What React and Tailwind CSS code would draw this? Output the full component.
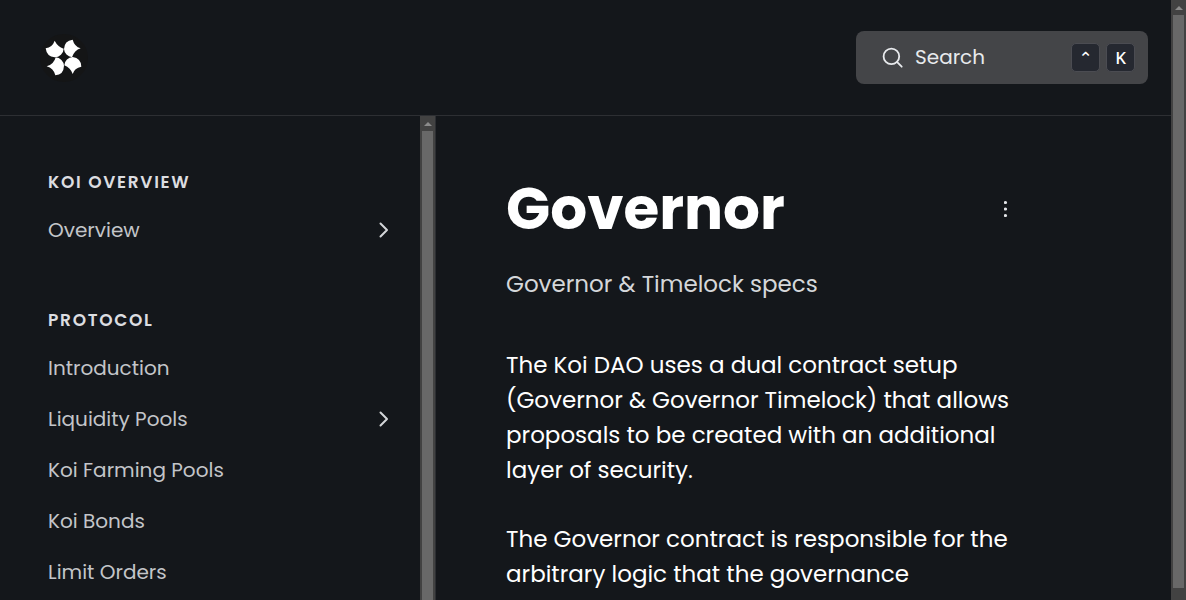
import React from "react";

const groups = [
  { title: "KOI OVERVIEW", items: [{ label: "Overview", nested: true }] },
  {
    title: "PROTOCOL",
    items: [
      { label: "Introduction" },
      { label: "Liquidity Pools", nested: true },
      { label: "Koi Farming Pools" },
      { label: "Koi Bonds" },
      { label: "Limit Orders" },
    ],
  },
];

function Logo() {
  return (
    <svg viewBox="0 0 162 162" className="size-[54px]" aria-hidden="true">
      <circle cx="81" cy="81" r="72" fill="#141516" />
      <g fill="#fff">
        <path d="M53 29Q62 47 80 53A27 27 0 0 1 53 79Q29 77 26 52Q46 49 53 29Z" />
        <path d="M107 26Q112 46 131 52Q112 58 105 79A27 27 0 0 1 81 54Q82 29 107 26Z" />
        <path d="M133 107Q112 111 107 129Q101 111 82 103A27 27 0 0 1 107 78Q132 81 133 107Z" />
        <path d="M55 133Q50 112 29 106Q51 100 56 79A27 27 0 0 1 81 104Q80 131 55 133Z" />
      </g>
    </svg>
  );
}

function Chevron() {
  return (
    <svg viewBox="0 0 10 16" className="h-4 w-[10px]" fill="none" stroke="#d4d6d9" strokeWidth="2" strokeLinecap="round" strokeLinejoin="round" aria-hidden="true">
      <path d="M1.5 1.5L8 8L1.5 14.5" />
    </svg>
  );
}

function Scrollbar({ end }) {
  return (
    <div className="flex w-[15px] shrink-0 flex-col items-center bg-[#424242]" aria-hidden="true">
      <div className="flex h-[15px] shrink-0 items-center">
        <svg viewBox="0 0 8 4" className="h-1 w-2" fill="#8b8b8b">
          <path d="M4 0L8 4H0Z" />
        </svg>
      </div>
      <div className="w-[11px] grow bg-[#686868]" />
      {end && <div className="h-3 shrink-0" />}
    </div>
  );
}

function Key({ children }) {
  return (
    <kbd className="flex size-[29px] items-center justify-center rounded-[5px] border border-[#4b4c52] bg-[#252830] font-['Noto_Sans','DejaVu_Sans',sans-serif] text-[17px] leading-6 font-medium text-white">
      {children}
    </kbd>
  );
}

export default function App() {
  return (
    <div className="flex h-screen overflow-hidden bg-[#14171b] font-[Poppins,Inter,sans-serif] text-white">
      <div className="flex min-w-0 grow flex-col">
        <header className="flex h-[116px] shrink-0 items-center justify-between border-b border-[#2d2f33] pr-[23px] pl-[37px]">
          <a href="#home" aria-label="Koi home">
            <Logo />
          </a>
          <button type="button" className="flex h-[53px] w-[292px] items-center rounded-lg bg-[#444548] pr-[13px] pl-[26px]">
            <svg viewBox="0 0 22 22" className="size-[22px]" fill="none" stroke="#e8eaed" strokeWidth="1.8" strokeLinecap="round" aria-hidden="true">
              <circle cx="9.4" cy="9.4" r="7.8" />
              <path d="M15.2 15.2L19.7 19.7" />
            </svg>
            <span className="ml-[11px] grow pb-0.5 text-left text-xl text-[#e8eaed]">Search</span>
            <span className="flex gap-1.5">
              <Key>⌃</Key>
              <Key>K</Key>
            </span>
          </button>
        </header>
        <div className="flex min-h-0 grow">
          <aside className="flex w-[436px] shrink-0 border-r border-[#2d2f33]">
            <nav className="flex grow flex-col gap-[43px] overflow-hidden pt-[45px]">
              {groups.map((group) => (
                <section key={group.title} className="shrink-0">
                  <h2 className="flex h-11 items-center pl-12 text-[17px] font-semibold tracking-widest text-[#dcdde0]">{group.title}</h2>
                  <ul>
                    {group.items.map((item) => (
                      <li key={item.label}>
                        <a href="#page" className="flex h-[51px] items-center justify-between pr-[31px] pb-0.5 pl-12 text-xl text-[#c3c5c9]">
                          {item.label}
                          {item.nested && <Chevron />}
                        </a>
                      </li>
                    ))}
                  </ul>
                </section>
              ))}
            </nav>
            <Scrollbar />
          </aside>
          <main className="min-w-0 grow overflow-hidden pt-[58px] pl-[70px]">
            <div className="max-w-[514px]">
              <div className="flex items-center justify-between">
                <h1 className="text-[58px] leading-[70px] font-bold">Governor</h1>
                <button type="button" aria-label="More actions" className="flex w-7 justify-center">
                  <svg viewBox="0 0 4 18" className="h-[18px] w-1" fill="#e3e5e8" aria-hidden="true">
                    <circle cx="1.5" cy="2.5" r="1.6" />
                    <circle cx="1.5" cy="9" r="1.6" />
                    <circle cx="1.5" cy="15.5" r="1.6" />
                  </svg>
                </button>
              </div>
              <p className="mt-[23px] text-[23px] leading-[35px] text-[#d5d7da]">Governor &amp; Timelock specs</p>
              <div className="mt-[46px] flex flex-col gap-[34px] text-[23px] leading-[35px]">
                <p>
                  The Koi DAO uses a dual contract setup (Governor &amp; Governor Timelock) that allows proposals to be created with an additional layer of security.
                </p>
                <p>
                  The Governor contract is responsible for the arbitrary logic that the governance
                </p>
              </div>
            </div>
          </main>
        </div>
      </div>
      <Scrollbar end />
    </div>
  );
}
